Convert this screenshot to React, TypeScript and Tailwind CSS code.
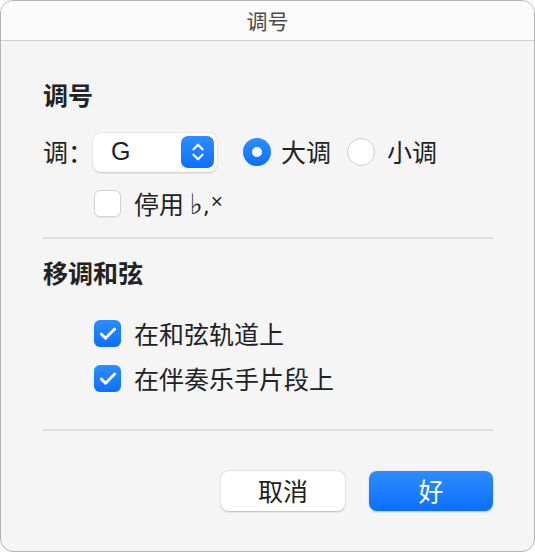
import { Check, ChevronUp, ChevronDown } from "lucide-react";

const font = { fontFamily: '"Noto Sans CJK SC", "Noto Sans", sans-serif' };

function Checkbox({ checked }: { checked?: boolean }) {
  return checked ? (
    <span className="flex h-[27px] w-[27px] shrink-0 items-center justify-center rounded-[6px] bg-gradient-to-b from-[#2e8dff] to-[#0a6ffd]">
      <Check className="size-[20px] text-white" strokeWidth={3.5} />
    </span>
  ) : (
    <span className="h-[27px] w-[27px] shrink-0 rounded-[6px] border border-[#d2d2d2] bg-white shadow-[0_1px_1px_rgba(0,0,0,0.05)]" />
  );
}

function Radio({ checked }: { checked?: boolean }) {
  return checked ? (
    <span className="flex h-[28px] w-[28px] items-center justify-center rounded-full bg-gradient-to-b from-[#2e8dff] to-[#0a6ffd]">
      <span className="h-[10px] w-[10px] rounded-full bg-white" />
    </span>
  ) : (
    <span className="h-[28px] w-[28px] rounded-full border border-[#d0d0d0] bg-white" />
  );
}

export default function App() {
  return (
    <div className="h-[553px] w-[535px] bg-white" style={font}>
      <div className="flex h-[552px] w-[535px] flex-col overflow-hidden rounded-[13px] border border-[#b3b3b3] bg-[#f5f5f5]">
        <div className="flex h-[40px] shrink-0 items-center justify-center border-b border-[#cfcfcf] bg-[#fbfbfb] text-[21px] text-[#4a4a4a]">
          调号
        </div>
        <div className="flex flex-col pl-[42px] pr-[41px] text-[#222222]">
          <div className="mt-[39px] flex h-[30px] items-center text-[25px] font-bold">调号</div>
          <div className="mt-[22px] flex h-[40px] items-center">
            <span className="w-[50px] text-[25px]">调：</span>
            <div className="flex h-[39px] w-[124px] items-center justify-between rounded-[8px] bg-white pl-[18px] pr-[3px] shadow-[0_0.5px_2px_rgba(0,0,0,0.2)]">
              <span className="text-[25px]" style={{ fontFamily: '"Liberation Sans", sans-serif' }}>G</span>
              <span className="flex h-[32px] w-[33px] flex-col items-center justify-center rounded-[7px] bg-gradient-to-b from-[#2e8dff] to-[#0a6ffd]">
                <ChevronUp className="-mb-[4px] size-[18px] text-white" strokeWidth={3} />
                <ChevronDown className="-mt-[4px] size-[18px] text-white" strokeWidth={3} />
              </span>
            </div>
            <div className="ml-[26px] flex items-center gap-[10px]">
              <Radio checked />
              <span className="text-[25px]">大调</span>
            </div>
            <div className="ml-[16px] flex items-center gap-[12px]">
              <Radio />
              <span className="text-[25px]">小调</span>
            </div>
          </div>
          <div className="ml-[51px] mt-[18px] flex h-[27px] items-center gap-[13px]">
            <Checkbox />
            <span className="text-[25px]">
              停用{" "}
              <span style={{ fontFamily: '"DejaVu Sans", sans-serif' }} className="text-[28px] leading-none">♭</span>
              <span style={{ fontFamily: '"DejaVu Sans", sans-serif' }} className="text-[22px]">,</span>
              <span className="relative -top-[8px] text-[14px] font-bold">×</span>
            </span>
          </div>
          <div className="mt-[20px] h-[2px] bg-[#dddddd]" />
          <div className="mt-[19px] flex h-[30px] items-center text-[25px] font-bold">移调和弦</div>
          <div className="ml-[51px] mt-[32px] flex h-[27px] items-center gap-[13px]">
            <Checkbox checked />
            <span className="text-[25px]">在和弦轨道上</span>
          </div>
          <div className="ml-[51px] mt-[18px] flex h-[27px] items-center gap-[13px]">
            <Checkbox checked />
            <span className="text-[25px]">在伴奏乐手片段上</span>
          </div>
          <div className="mt-[37px] h-[2px] bg-[#dddddd]" />
          <div className="mt-[40px] flex justify-end gap-[24px]">
            <button className="flex h-[40px] w-[124px] items-center justify-center rounded-[8px] bg-white text-[25px] text-[#222222] shadow-[0_0.5px_2px_rgba(0,0,0,0.25)]">
              取消
            </button>
            <button className="flex h-[40px] w-[124px] items-center justify-center rounded-[8px] bg-gradient-to-b from-[#2d8cff] to-[#0a6ffd] text-[25px] text-white shadow-[0_0.5px_2px_rgba(0,0,0,0.2)]">
              好
            </button>
          </div>
        </div>
      </div>
    </div>
  );
}
